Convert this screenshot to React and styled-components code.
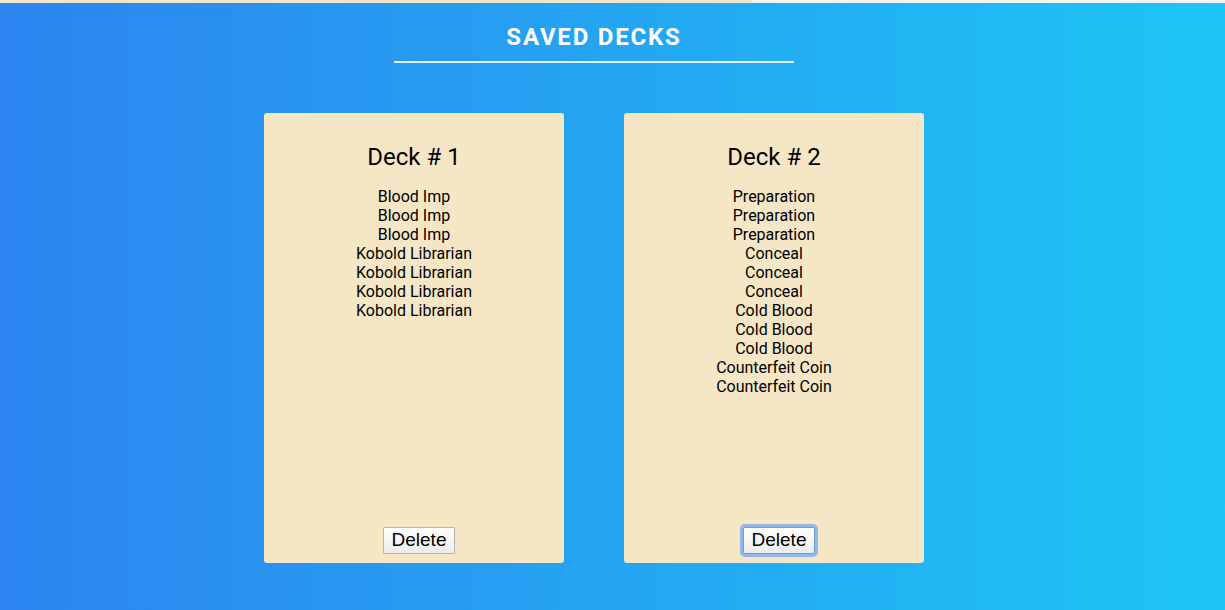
import React from "react";
import styled, { createGlobalStyle, css } from "styled-components";

const Global = createGlobalStyle`
  html, body { margin: 0; padding: 0; height: 100%; }
  body {
    font-family: Roboto, "Noto Sans", sans-serif;
    background: linear-gradient(to right, #2c84f0, #1dc6f4);
    min-height: 610px;
    overflow: hidden;
  }
`;

const Page = styled.div`
  min-height: 610px;
  display: flex;
  flex-direction: column;
`;

const ProgressTrack = styled.div`
  height: 3px;
  background: #f4f4f4;
  display: flex;
`;

const ProgressFill = styled.div`
  height: 100%;
  background: #f2e6c9;
`;

const Main = styled.main`
  display: flex;
  flex-direction: column;
  align-items: center;
  padding-right: 37px;
`;

const Title = styled.h1`
  margin: 20px 0 0;
  font-family: Roboto, sans-serif;
  font-weight: 700;
  font-size: 24px;
  line-height: 28px;
  letter-spacing: 1.8px;
  color: #ffffff;
  text-transform: uppercase;
`;

const Rule = styled.div`
  width: 400px;
  height: 2px;
  margin-top: 10px;
  background: #e6ecef;
`;

const DeckRow = styled.div`
  display: flex;
  gap: 60px;
  margin-top: 50px;
`;

const Card = styled.section`
  width: 300px;
  height: 450px;
  box-sizing: border-box;
  background: #f5e7c6;
  border-radius: 3px;
  padding: 30px 0 9px;
  display: flex;
  flex-direction: column;
  align-items: center;
`;

const DeckTitle = styled.h2`
  margin: 0;
  font-family: Roboto, sans-serif;
  font-weight: 400;
  font-size: 24px;
  line-height: 28px;
  color: #000;
`;

const CardList = styled.ul`
  list-style: none;
  margin: 16px 0 0;
  padding: 0;
  text-align: center;
`;

const CardItem = styled.li`
  font-family: Roboto, sans-serif;
  font-size: 16px;
  line-height: 19px;
  color: #000;
`;

const DeleteButton = styled.button`
  margin-top: auto;
  margin-left: 10px;
  font-family: "Liberation Sans", Arial, sans-serif;
  font-size: 19px;
  line-height: 21px;
  padding: 1px 8px 3px;
  color: #000;
  background: linear-gradient(#ffffff, #ececec);
  border: 1px solid #b4b4b4;
  border-radius: 1px;
  cursor: pointer;
  ${(p) =>
    p.$focused &&
    css`
      border-color: #6f9ad9;
      box-shadow: 0 0 0 3px #92b7ea;
      border-radius: 2px;
    `}
`;

const decks = [
  {
    name: "Deck # 1",
    cards: [
      "Blood Imp",
      "Blood Imp",
      "Blood Imp",
      "Kobold Librarian",
      "Kobold Librarian",
      "Kobold Librarian",
      "Kobold Librarian",
    ],
  },
  {
    name: "Deck # 2",
    focused: true,
    cards: [
      "Preparation",
      "Preparation",
      "Preparation",
      "Conceal",
      "Conceal",
      "Conceal",
      "Cold Blood",
      "Cold Blood",
      "Cold Blood",
      "Counterfeit Coin",
      "Counterfeit Coin",
    ],
  },
];

export default function App() {
  return (
    <>
      <Global />
      <Page>
        <ProgressTrack>
          <ProgressFill style={{ width: "752px" }} />
        </ProgressTrack>
        <Main>
          <Title>Saved Decks</Title>
          <Rule />
          <DeckRow>
            {decks.map((d) => (
              <Card key={d.name}>
                <DeckTitle>{d.name}</DeckTitle>
                <CardList>
                  {d.cards.map((c, i) => (
                    <CardItem key={i}>{c}</CardItem>
                  ))}
                </CardList>
                <DeleteButton $focused={d.focused}>Delete</DeleteButton>
              </Card>
            ))}
          </DeckRow>
        </Main>
      </Page>
    </>
  );
}
